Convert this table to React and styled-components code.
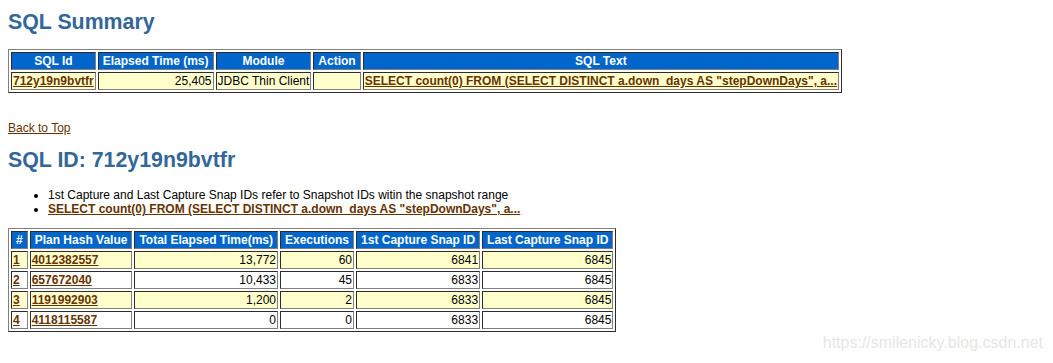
import React from 'react';
import styled, { createGlobalStyle } from 'styled-components';

// AWR style report: SQL summary + plan stats for one sql id

const GlobalStyle = createGlobalStyle`
  html, body {
    margin: 0;
    padding: 0;
    background: #fff;
  }
  body {
    font-family: "Liberation Sans", Arial, sans-serif;
    font-size: 12px;
    color: #000;
  }
`

const Page = styled.div`
  position: relative;
  min-height: 363px;
  box-sizing: border-box;
  padding: 10px 8px 0;
`

const Heading = styled.h3`
  margin: ${p => p.$top || 0}px 0 0;
  font: bold 21.33px/24px "Liberation Sans", Arial, sans-serif;
  color: #336699;
`

const DataTable = styled.table`
  margin-top: ${p => p.$top}px;
  border: 1px outset grey;
  border-collapse: separate;
  border-spacing: 2px;
  font-size: 12px;
  line-height: 14px;
`

const HeadCell = styled.th`
  border: 1px inset grey;
  padding: 1px 4px;
  background: #0066cc;
  color: #fff;
  font-weight: bold;
  text-align: center;
  white-space: nowrap;
`

const Cell = styled.td`
  border: 1px inset grey;
  padding: 1px;
  background: ${p => (p.$alt ? '#fff' : '#ffffcc')};
  text-align: ${p => (p.$num ? 'right' : 'left')};
  vertical-align: top;
  white-space: nowrap;
`

const Link = styled.a`
  font-weight: bold;
  color: #663300;
  text-decoration: underline;
  cursor: pointer;
`

const BackLink = styled.a`
  display: block;
  width: max-content;
  margin-top: 28px;
  line-height: 14px;
  color: #663300;
  text-decoration: underline;
  cursor: pointer;
`

const NoteList = styled.ul`
  margin: 16px 0 0;
  padding-left: 40px;
  line-height: 14px;

  > li {
    list-style: disc;
  }
`

const Watermark = styled.span`
  position: absolute;
  right: 10px;
  top: 334px;
  font-size: 16px;
  color: #e6e6e6;
  pointer-events: none;
`

const sqlText = 'SELECT count(0) FROM (SELECT DISTINCT a.down_days AS "stepDownDays", a...'

const plans = [
  { n: 1, hash: '4012382557', elapsed: '13,772', execs: 60, first: 6841, last: 6845 },
  { n: 2, hash: '657672040', elapsed: '10,433', execs: 45, first: 6833, last: 6845 },
  { n: 3, hash: '1191992903', elapsed: '1,200', execs: 2, first: 6833, last: 6845 },
  { n: 4, hash: '4118115587', elapsed: '0', execs: 0, first: 6833, last: 6845 },
]

const planCols = ['#', 'Plan Hash Value', 'Total Elapsed Time(ms)', 'Executions', '1st Capture Snap ID', 'Last Capture Snap ID']

const App = () => {
  return (
    <Page>
      <GlobalStyle />
      <Heading>SQL Summary</Heading>
      <DataTable $top={15}>
        <tbody>
          <tr>
            <HeadCell>SQL Id</HeadCell>
            <HeadCell>Elapsed Time (ms)</HeadCell>
            <HeadCell>Module</HeadCell>
            <HeadCell>Action</HeadCell>
            <HeadCell>SQL Text</HeadCell>
          </tr>
          <tr>
            <Cell><Link>712y19n9bvtfr</Link></Cell>
            <Cell $num>25,405</Cell>
            <Cell>JDBC Thin Client</Cell>
            <Cell></Cell>
            <Cell><Link>{sqlText}</Link></Cell>
          </tr>
        </tbody>
      </DataTable>

      <BackLink>Back to Top</BackLink>

      <Heading $top={13}>SQL ID: 712y19n9bvtfr</Heading>
      <NoteList>
        <li>1st Capture and Last Capture Snap IDs refer to Snapshot IDs witin the snapshot range</li>
        <li><Link>{sqlText}</Link></li>
      </NoteList>

      <DataTable $top={12}>
        <tbody>
          <tr>
            {planCols.map(c => <HeadCell key={c}>{c}</HeadCell>)}
          </tr>
          {plans.map((p, i) => (
            <tr key={p.n}>
              <Cell $alt={i % 2 === 1}><Link>{p.n}</Link></Cell>
              <Cell $alt={i % 2 === 1}><Link>{p.hash}</Link></Cell>
              <Cell $alt={i % 2 === 1} $num>{p.elapsed}</Cell>
              <Cell $alt={i % 2 === 1} $num>{p.execs}</Cell>
              <Cell $alt={i % 2 === 1} $num>{p.first}</Cell>
              <Cell $alt={i % 2 === 1} $num>{p.last}</Cell>
            </tr>
          ))}
        </tbody>
      </DataTable>

      <Watermark>https://smilenicky.blog.csdn.net</Watermark>
    </Page>
  )
}

export default App;
